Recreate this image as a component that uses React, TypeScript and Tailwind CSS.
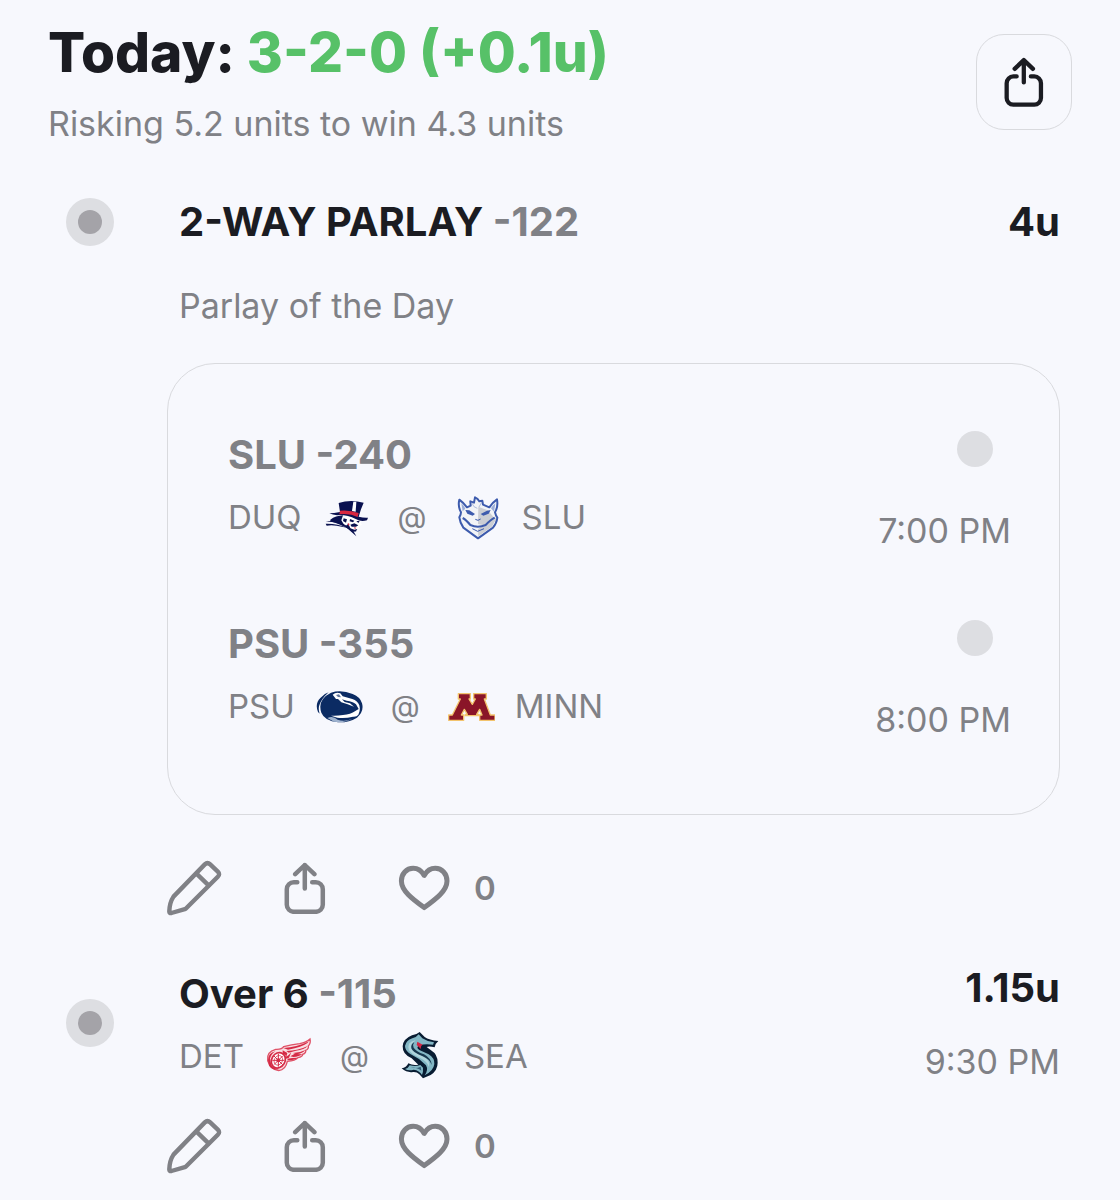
import { useState, type ReactNode } from "react";

function ShareIcon({ className }: { className: string }) {
  return (
    <svg
      viewBox="0 0 42 52"
      className={className}
      fill="none"
      stroke="currentColor"
      strokeWidth="4.5"
      strokeLinecap="round"
      strokeLinejoin="round"
      aria-hidden="true"
    >
      <path d="M20.8 3V26.5M11.2 12.2L20.8 3L30.4 12.2" />
      <path d="M13.3 20.2H9.8A7 7 0 0 0 2.8 27.2V42.8A7 7 0 0 0 9.8 49.8H31.8A7 7 0 0 0 38.8 42.8V27.2A7 7 0 0 0 31.8 20.2H28.2" />
    </svg>
  );
}

function PencilIcon() {
  return (
    <svg
      viewBox="1 -1 56 56"
      className="size-14"
      fill="none"
      stroke="currentColor"
      strokeWidth="4.4"
      strokeLinecap="round"
      strokeLinejoin="round"
      aria-hidden="true"
    >
      <path d="M7.5 35.6L38.8 3.4Q41.5 .8 44.2 3.4L51.8 10.6Q54.4 13.2 51.8 15.8L19.7 47.8L5.4 52Q3.2 52.4 3.3 50.2Q3.6 41.5 7.5 35.6Z" />
      <path d="M31 13.2L42.6 24.4" />
    </svg>
  );
}

function HeartIcon({ filled }: { filled: boolean }) {
  return (
    <svg
      viewBox="0 0 52 46"
      className="h-[46px] w-[52px]"
      fill={filled ? "currentColor" : "none"}
      stroke="currentColor"
      strokeWidth="5"
      strokeLinejoin="round"
      aria-hidden="true"
    >
      <path d="M26.2 10.4C23.4 5.6 19.6 3.3 15.2 3.3C8.4 3.3 3.4 8.8 3.4 16C3.4 25.8 14.4 34 26.2 42.6C38 34 49 25.8 49 16C49 8.8 44 3.3 37.2 3.3C32.8 3.3 29 5.6 26.2 10.4Z" />
    </svg>
  );
}

function DuquesneLogo() {
  return (
    <svg viewBox="36 9 144 144" className="size-12" role="img" aria-label="Duquesne">
      <path d="M104 80L150 82L149 98L153 104L146 108L142 119L134 123L122 117L104 109L92 94Z" fill="#fff" />
      <path d="M83 39Q118 27 158 38L150 58L143 80Q158 84 171 83L168 91Q150 97 134 87Q112 75 86 75Q68 77 55 70Q68 70 87 66Z" fill="#0a1150" />
      <path d="M127 35L136 35L134 65L123 63Z" fill="#fff" />
      <path d="M87 62Q115 59 143 69L140 81Q116 69 85 73Z" fill="#d8263f" />
      <path d="M58 89Q74 77 96 76L91 91L101 107L112 112L126 128L119 121Q86 101 58 94Z" fill="#0a1150" />
      <path d="M44 95Q76 94 101 108L136 139L127 123L137 125Q120 120 103 105Q75 89 44 95Z" fill="#0a1150" />
      <path d="M44 101Q78 100 108 113L96 111Q66 103 47 107Z" fill="#0a1150" />
      <path d="M98 85L108 88L105 98L96 93ZM117 87L130 92L126 97L116 94ZM136 93L146 93L142 99ZM118 104L130 100L142 106L135 110L122 110ZM104 108L112 101L118 115L130 119L139 117L135 124L124 125Z" fill="#0a1150" />
      <path d="M110 99L116 102L112 108ZM128 112L136 113L132 117Z" fill="#d8263f" />
    </svg>
  );
}

function SaintLouisLogo() {
  return (
    <svg viewBox="27 24 144 144" className="size-12" role="img" aria-label="Saint Louis">
      <path
        d="M43 97Q48 88 48 82Q38 64 43 44Q55 53 66 67L77 62L76 49L87 53L90 37Q99 41 103 49L112 47L114 59L133 67Q143 52 156 43Q160 65 150 82Q152 91 157 98Q155 115 144 128L99 160L55 128Q45 113 43 97Z"
        fill="#f2f4f7"
        stroke="#3d5bad"
        strokeWidth="6"
        strokeLinejoin="round"
      />
      <path d="M100 65L128 76L145 95L154 101L140 126L100 154L99 133L112 120L99 117Z" fill="#cbced4" />
      <path d="M49 55Q57 62 61 71L53 79ZM151 55Q143 62 138 70L147 80Z" fill="#9caed8" />
      <path d="M61 75L73 76L90 87L83 92L67 86ZM137 75L126 77L107 87L115 92L131 86Z" fill="#3d5bad" />
      <path d="M53 99Q63 104 76 120Q98 130 122 120Q137 104 149 98" fill="none" stroke="#3d5bad" strokeWidth="6" />
      <path d="M82 131L98 139L117 131M91 103L99 106L107 102" fill="none" stroke="#3d5bad" strokeWidth="3" />
      <path d="M80 53L87 65L97 70M110 52L102 66" fill="none" stroke="#8fa1ce" strokeWidth="2" />
    </svg>
  );
}

function PennStateLogo() {
  return (
    <svg viewBox="30 6 144 144" className="size-12" role="img" aria-label="Penn State">
      <path d="M36 96Q26 71 43 54Q54 41 68 37Q45 57 39 79Q37 89 41 101Z" fill="#0b2b63" />
      <path d="M46 98Q33 59 75 38Q106 28 140 42Q163 51 168 70Q175 94 153 113Q129 128 96 127Q56 123 46 98Z" fill="#0b2b63" />
      <path d="M80 44Q90 35 103 40L110 49L139 57Q155 62 160 76Q164 91 157 104Q152 111 141 110Q117 116 94 113L75 107Q94 108 111 105Q134 103 148 93L158 87L150 73Q140 64 122 62L108 58L116 66L132 70L144 80L125 73L106 67L96 57L90 57Z" fill="#fff" />
      <path d="M90 45L99 43L105 52L96 51Z" fill="#5f7399" />
      <path d="M64 114Q81 106 95 119Q116 126 139 116Q114 130 84 125Z" fill="#9fb3cf" />
    </svg>
  );
}

function MinnesotaLogo() {
  return (
    <svg viewBox="33 6 144 144" className="size-12" role="img" aria-label="Minnesota">
      <path
        d="M67 41H103V57H99L109 73L118 57H113V41H151V57H145L163 105H177V121H131V105H138L131 88L122 103H128V107H88V103H94L85 88L76 105H83V121H38V105H49L73 57H67Z"
        fill="#8a1528"
        stroke="#f3c46d"
        strokeWidth="4"
        strokeLinejoin="round"
      />
    </svg>
  );
}

function RedWingsLogo() {
  return (
    <svg viewBox="27 24 144 144" className="size-12" role="img" aria-label="Detroit Red Wings">
      <path d="M35 110Q31 83 59 76Q78 77 83 68Q106 62 131 59Q151 55 162 45Q165 58 157 66Q159 75 149 79Q151 87 140 91Q140 99 126 101Q118 111 94 112Q89 137 68 140Q45 137 35 110Z" fill="#f9dfe3" stroke="#df5267" strokeWidth="4" />
      <path d="M82 72Q123 70 159 52Q151 64 116 73L96 77ZM91 81Q128 79 155 66Q145 77 120 80L98 86ZM111 87Q133 86 149 78Q140 88 121 91ZM103 97L115 90L139 91Q130 98 112 99ZM94 104L109 102L125 101Q114 109 95 109Z" fill="#d52b46" />
      <path d="M80 79L94 87L91 98L99 92L106 84L99 101L86 106L89 93L80 90Z" fill="#d52b46" />
      <ellipse cx="67" cy="109" rx="20" ry="24" transform="rotate(30 67 109)" fill="#fff" stroke="#d52b46" strokeWidth="5" />
      <ellipse cx="67" cy="109" rx="12" ry="15" transform="rotate(30 67 109)" fill="none" stroke="#d52b46" strokeWidth="2" />
      <path d="M67 90V128M49 109H85M54 96L80 122M80 96L54 122" stroke="#d52b46" strokeWidth="3" />
      <circle cx="67" cy="109" r="6" fill="#d52b46" />
      <path d="M36 109Q36 87 58 82Q45 91 42 104L46 123Q55 135 70 136Q49 140 39 125Z" fill="#d52b46" />
    </svg>
  );
}

function KrakenLogo() {
  return (
    <svg viewBox="33 24 144 144" className="size-12" role="img" aria-label="Seattle Kraken">
      <path d="M104 24L119 39Q132 48 160 51Q151 58 149 70Q132 65 125 69L138 79Q158 91 158 116Q158 139 137 153L114 163L103 151Q96 143 84 144Q66 147 50 133Q64 132 70 118Q84 126 100 122L80 103Q52 91 53 67Q54 45 81 34Q96 31 104 24Z" fill="#081c32" />
      <path d="M101 31L112 43Q127 53 147 55L144 62Q120 58 104 64Q91 70 103 78L131 91Q149 102 148 120Q146 140 119 154Q131 138 123 124L102 105L76 90Q60 80 60 66Q63 50 82 43Q96 39 101 31Z" fill="#83b7c5" />
      <path d="M72 59Q78 51 92 49Q77 60 80 73Q86 84 108 93Q132 105 133 119L132 129Q127 112 104 101Q78 90 72 79Q68 69 72 59Z" fill="#aed4dc" />
      <path d="M88 54Q82 62 86 71Q93 82 117 91Q139 103 140 123Q135 106 113 97Q83 86 79 73Q77 60 88 54Z" fill="#17384f" />
      <path d="M97 53L113 62Q106 66 108 75L95 63Z" fill="#d12745" />
      <path d="M60 135Q70 133 74 124Q91 129 106 123L114 131Q115 145 111 153Q103 139 86 137Q71 141 60 135Z" fill="#83b7c5" />
      <path d="M77 130Q94 135 107 128L109 140Q97 131 77 130Z" fill="#355f79" />
    </svg>
  );
}

type Team = { name: string; logo: ReactNode };

const DUQ: Team = { name: "DUQ", logo: <DuquesneLogo /> };
const SLU: Team = { name: "SLU", logo: <SaintLouisLogo /> };
const PSU: Team = { name: "PSU", logo: <PennStateLogo /> };
const MINN: Team = { name: "MINN", logo: <MinnesotaLogo /> };
const DET: Team = { name: "DET", logo: <RedWingsLogo /> };
const SEA: Team = { name: "SEA", logo: <KrakenLogo /> };

const legs = [
  { pick: "SLU -240", away: DUQ, home: SLU, time: "7:00 PM" },
  { pick: "PSU -355", away: PSU, home: MINN, time: "8:00 PM" },
];

function Matchup({ away, home }: { away: Team; home: Team }) {
  return (
    <div className="mt-3.5 flex h-12 items-center text-[33px] leading-10">
      <span className="mr-[21px]">{away.name}</span>
      {away.logo}
      <span className="mx-[27px] text-[30px]">@</span>
      {home.logo}
      <span className="ml-5">{home.name}</span>
    </div>
  );
}

function StatusDot() {
  return (
    <span className="flex size-12 shrink-0 items-center justify-center rounded-full bg-[#dddee2]">
      <span className="size-6 rounded-full bg-[#a4a3a8]" />
    </span>
  );
}

function Actions() {
  const [liked, setLiked] = useState(false);

  return (
    <div className="flex h-14 items-center">
      <button type="button" aria-label="Edit pick">
        <PencilIcon />
      </button>
      <button type="button" aria-label="Share pick" className="ml-[61px]">
        <ShareIcon className="h-[52px] w-[42px]" />
      </button>
      <button
        type="button"
        aria-label="Like pick"
        aria-pressed={liked}
        onClick={() => setLiked(!liked)}
        className="ml-[72px] flex items-center gap-6 text-[33px] leading-10 font-semibold"
      >
        <HeartIcon filled={liked} />
        <span>{liked ? 1 : 0}</span>
      </button>
    </div>
  );
}

export default function App() {
  return (
    <main className="min-h-screen bg-[#f7f8fd] px-12 pt-6 pb-6 font-['Inter',sans-serif] text-[#808186]">
      <header className="flex items-start justify-between">
        <div>
          <h1 className="text-[55px] leading-14 font-extrabold text-[#1b1c22]">
            Today: <span className="text-[#57c168]">3-2-0 (+0.1u)</span>
          </h1>
          <p className="mt-6 text-[34px] leading-10">Risking 5.2 units to win 4.3 units</p>
        </div>
        <button
          type="button"
          aria-label="Share today's picks"
          className="mt-2.5 flex size-24 items-center justify-center rounded-[28px] border border-[#d9dade] text-[#1b1c22]"
        >
          <ShareIcon className="h-[50px] w-10" />
        </button>
      </header>

      <section className="mt-[54px] flex items-start gap-[53px] pr-3 pl-[18px]">
        <StatusDot />
        <div className="min-w-0 grow">
          <div className="flex justify-between pl-3 text-[40px] leading-12 font-bold">
            <h2>
              <span className="text-[#1b1c22]">2-WAY PARLAY</span> -122
            </h2>
            <span className="text-[#1b1c22]">4u</span>
          </div>
          <p className="mt-10 pl-3 text-[34px] leading-10">Parlay of the Day</p>

          <ul className="mt-[37px] flex flex-col gap-[69px] rounded-[48px] border border-[#d9dade] pt-[67px] pr-12 pb-[74px] pl-[60px]">
            {legs.map((leg) => (
              <li key={leg.pick} className="flex justify-between">
                <div>
                  <h3 className="text-[40px] leading-12 font-bold">{leg.pick}</h3>
                  <Matchup away={leg.away} home={leg.home} />
                </div>
                <div className="flex flex-col items-end gap-11">
                  <span className="mr-[18px] size-9 rounded-full bg-[#dddee2]" />
                  <time className="text-[34px] leading-10">{leg.time}</time>
                </div>
              </li>
            ))}
          </ul>

          <div className="mt-[45px]">
            <Actions />
          </div>
        </div>
      </section>

      <section className="mt-12 flex items-start gap-[53px] pr-3 pl-[18px]">
        <div className="flex h-[118px] items-center">
          <StatusDot />
        </div>
        <div className="min-w-0 grow">
          <div className="flex justify-between pl-3">
            <div className="pt-1.5">
              <h2 className="text-[40px] leading-12 font-bold">
                <span className="text-[#1b1c22]">Over 6</span> -115
              </h2>
              <Matchup away={DET} home={SEA} />
            </div>
            <div className="flex flex-col items-end gap-[30px]">
              <span className="text-[40px] leading-12 font-bold text-[#1b1c22]">1.15u</span>
              <time className="text-[34px] leading-10">9:30 PM</time>
            </div>
          </div>
          <div className="mt-9">
            <Actions />
          </div>
        </div>
      </section>
    </main>
  );
}
